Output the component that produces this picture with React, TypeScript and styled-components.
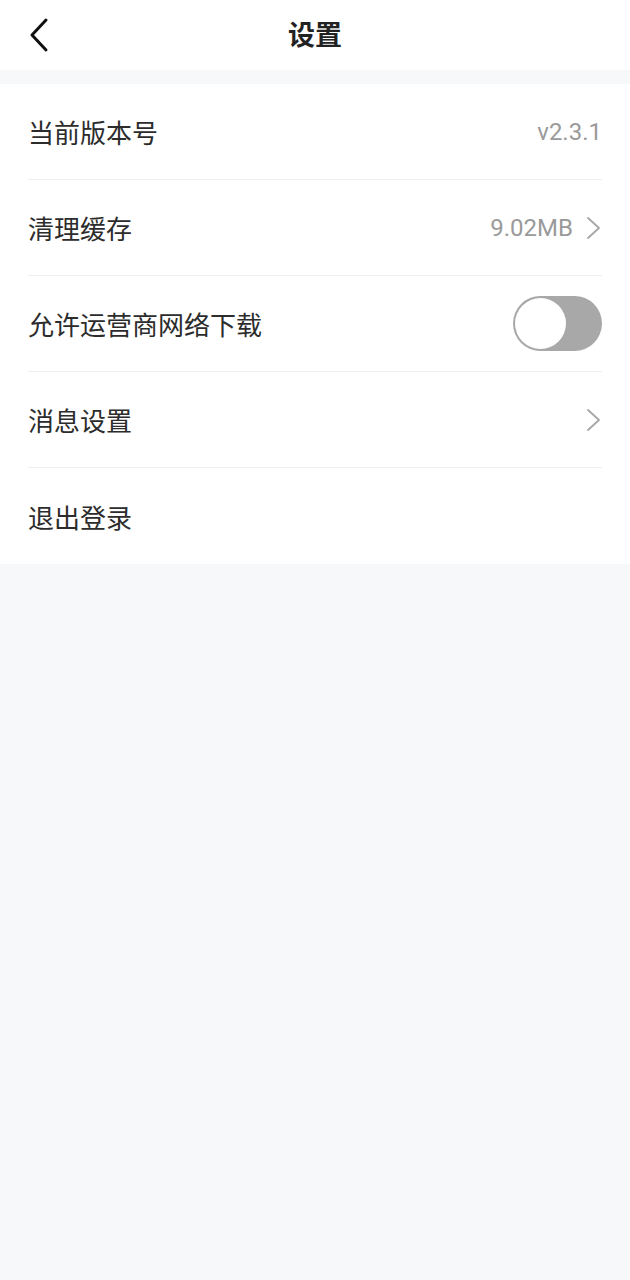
import styled, { createGlobalStyle } from "styled-components";

const GlobalStyle = createGlobalStyle`
  html, body {
    margin: 0;
    padding: 0;
    background: #f7f8fa;
    font-family: "Noto Sans CJK SC", "Noto Sans", Roboto, sans-serif;
  }
`;

const Page = styled.div`
  min-height: 1280px;
  background: #f7f8fa;
`;

const Header = styled.header`
  height: 70px;
  box-sizing: border-box;
  padding-bottom: 4px;
  background: #ffffff;
  display: flex;
  align-items: center;
  justify-content: center;
  position: relative;
  margin-bottom: 14px;
`;

const BackBtn = styled.button`
  position: absolute;
  left: 24px;
  top: 16px;
  width: 30px;
  height: 38px;
  padding: 0;
  border: none;
  background: transparent;
  display: flex;
  align-items: center;
  justify-content: center;
`;

const Title = styled.h1`
  margin: 0;
  font-size: 27px;
  font-weight: 700;
  color: #222222;
`;

const List = styled.div`
  background: #ffffff;
  padding: 0 28px;
`;

const Row = styled.div<{ $last?: boolean }>`
  height: 96px;
  display: flex;
  align-items: center;
  justify-content: space-between;
  box-sizing: border-box;
  border-bottom: ${(p) => (p.$last ? "none" : "1.5px solid #efefef")};
`;

const Label = styled.span`
  font-size: 26px;
  color: #2c2c2c;
`;

const Right = styled.div`
  display: flex;
  align-items: center;
  gap: 13px;
`;

const Value = styled.span`
  font-family: Roboto, "Noto Sans", sans-serif;
  font-size: 24px;
  color: #9a9a9a;
`;

const Toggle = styled.div`
  width: 89px;
  height: 55px;
  border-radius: 28px;
  background: #a8a8a8;
  box-sizing: border-box;
  padding: 2px;
  display: flex;
  align-items: center;
`;

const Knob = styled.div`
  width: 51px;
  height: 51px;
  border-radius: 50%;
  background: #ffffff;
`;

const Chevron = () => (
  <svg width="16" height="24" viewBox="0 0 16 24" fill="none">
    <path d="M2 2 L13 12 L2 22" stroke="#a6a6a6" strokeWidth="1.8" strokeLinecap="round" strokeLinejoin="round" />
  </svg>
);

export default function App() {
  return (
    <Page>
      <GlobalStyle />
      <Header>
        <BackBtn>
          <svg width="22" height="36" viewBox="0 0 22 36" fill="none">
            <path d="M18 3 L4 18 L18 33" stroke="#111111" strokeWidth="3" strokeLinecap="round" strokeLinejoin="round" />
          </svg>
        </BackBtn>
        <Title>设置</Title>
      </Header>
      <List>
        <Row>
          <Label>当前版本号</Label>
          <Value>v2.3.1</Value>
        </Row>
        <Row>
          <Label>清理缓存</Label>
          <Right>
            <Value>9.02MB</Value>
            <Chevron />
          </Right>
        </Row>
        <Row>
          <Label>允许运营商网络下载</Label>
          <Toggle>
            <Knob />
          </Toggle>
        </Row>
        <Row>
          <Label>消息设置</Label>
          <Chevron />
        </Row>
        <Row $last>
          <Label>退出登录</Label>
        </Row>
      </List>
    </Page>
  );
}
